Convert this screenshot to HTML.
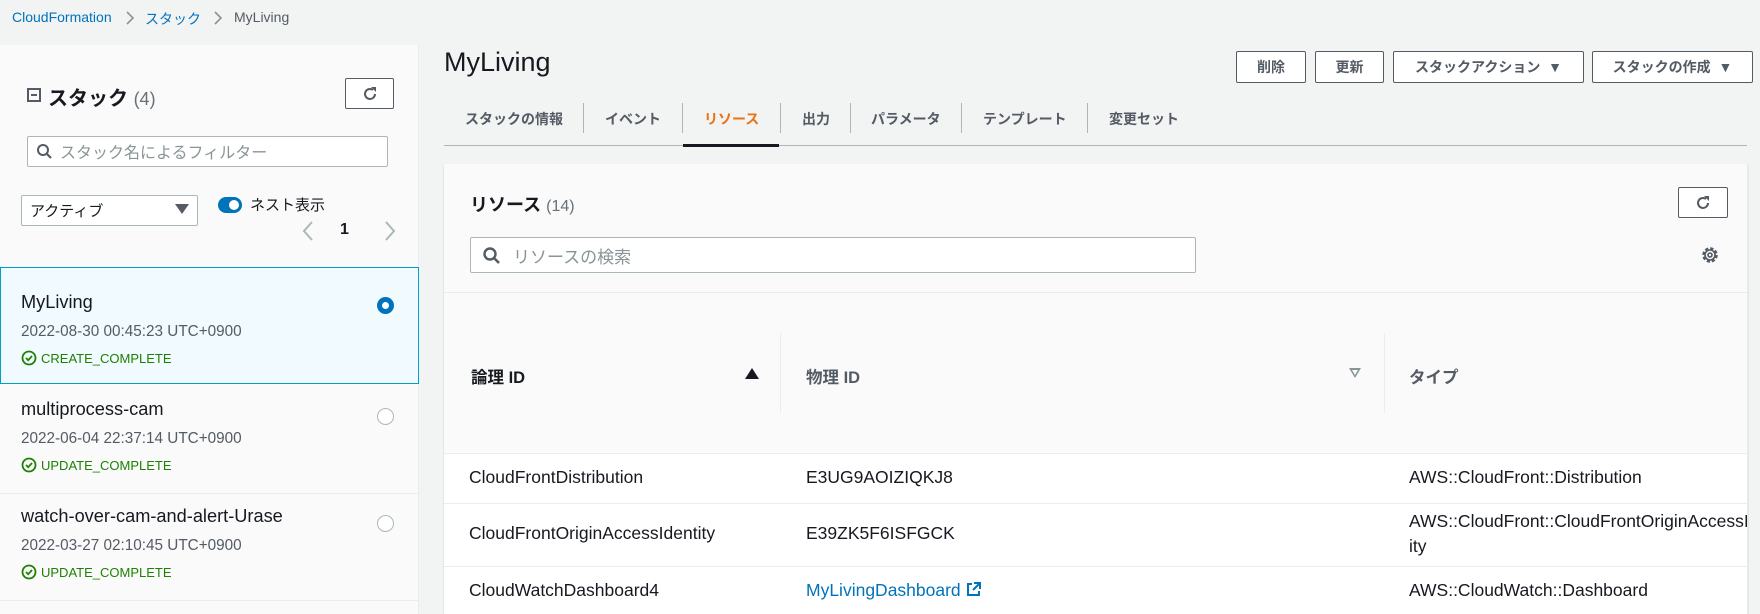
<!DOCTYPE html>
<html><head><meta charset="utf-8"><style>
*{box-sizing:border-box;margin:0;padding:0}
body{width:1760px;height:614px;overflow:hidden;background:#f2f3f3;font-family:"Liberation Sans","Noto Sans CJK JP",sans-serif;color:#16191f;position:relative}
.a{position:absolute;white-space:nowrap}
.btn{position:absolute;border:1px solid #545b64;background:#fff;border-radius:2px;font-size:14px;font-weight:bold;color:#545b64;display:flex;align-items:center;justify-content:center}
.sep{position:absolute;width:1px;background:#aab7b8}
.g{color:#1d8102;font-size:13px}
.row{position:absolute;left:444px;width:1303px;height:1px;background:#eaeded}
.t{font-size:17.5px}
.n{font-size:18.2px}
.d{font-size:15.3px;color:#545b64}
</style></head><body>
<div class="a" style="left:12px;top:9px;font-size:14px;color:#0073bb">CloudFormation</div>
<svg class="a" style="left:125px;top:10px" width="10" height="16"><path d="M2 2l6 6-6 6" fill="none" stroke="#879596" stroke-width="1.6"/></svg>
<div class="a" style="left:145px;top:9px;font-size:14px;color:#0073bb">スタック</div>
<svg class="a" style="left:213px;top:10px" width="10" height="16"><path d="M2 2l6 6-6 6" fill="none" stroke="#879596" stroke-width="1.6"/></svg>
<div class="a" style="left:234px;top:9px;font-size:14px;color:#545b64">MyLiving</div>

<div class="a" style="left:0;top:45px;width:419px;height:569px;background:#fafafa;border-right:1px solid #eaeded"></div>
<div class="a" style="left:27px;top:88px;width:14px;height:14px;border:2px solid #545b64"><div style="position:absolute;left:2px;top:4px;width:6px;height:2px;background:#545b64"></div></div>
<div class="a" style="left:48px;top:82px;font-size:20px;font-weight:bold">スタック <span style="font-weight:normal;color:#687078;font-size:18px">(4)</span></div>
<div class="btn" style="left:345px;top:78px;width:49px;height:31px"><svg width="18" height="18" viewBox="0 0 18 18"><path d="M14 9a5 5 0 1 1-2-4" fill="none" stroke="#545b64" stroke-width="2"/><path d="M10 2h5v5z" fill="#545b64"/></svg></div>
<div class="a" style="left:27px;top:136px;width:361px;height:31px;background:#fff;border:1px solid #aab7b8;border-radius:2px"></div>
<svg class="a" style="left:36px;top:143px" width="17" height="17" viewBox="0 0 17 17"><circle cx="7" cy="7" r="5" fill="none" stroke="#545b64" stroke-width="2"/><path d="M11 11l4 4" stroke="#545b64" stroke-width="2.2"/></svg>
<div class="a" style="left:60px;top:139px;font-size:16px;color:#879596">スタック名によるフィルター</div>
<div class="a" style="left:21px;top:195px;width:177px;height:31px;background:#fff;border:1px solid #aab7b8;border-radius:2px"></div>
<div class="a" style="left:30px;top:200px;font-size:15px">アクティブ</div>
<div class="a" style="left:175px;top:204px;width:0;height:0;border-left:7px solid transparent;border-right:7px solid transparent;border-top:10px solid #545b64"></div>
<div class="a" style="left:218px;top:197px;width:24px;height:16px;border-radius:8px;background:#0073bb"><div style="position:absolute;left:11px;top:3px;width:10px;height:10px;border-radius:50%;background:#fff"></div></div>
<div class="a" style="left:250px;top:194px;font-size:15px">ネスト表示</div>
<svg class="a" style="left:300px;top:219px" width="100" height="24"><path d="M12 3l-8 9 8 9" fill="none" stroke="#aab7b8" stroke-width="2"/><path d="M86 3l8 9-8 9" fill="none" stroke="#aab7b8" stroke-width="2"/></svg>
<div class="a" style="left:340px;top:221px;font-size:16px;font-weight:bold">1</div>

<div class="a" style="left:0;top:267px;width:419px;height:117px;background:#f1faff;border:1px solid #00a1c9"></div>
<div class="a n" style="left:21px;top:292px">MyLiving</div>
<div class="a d" style="left:21px;top:323px">2022-08-30 00:45:23 UTC+0900</div>
<div class="a" style="left:377px;top:297px;width:17px;height:17px;border-radius:50%;background:#0073bb"><div style="position:absolute;left:5px;top:5px;width:7px;height:7px;border-radius:50%;background:#fff"></div></div>
<div class="a" style="left:0;top:493px;width:419px;height:1px;background:#eaeded"></div>
<div class="a n" style="left:21px;top:399px">multiprocess-cam</div>
<div class="a d" style="left:21px;top:430px">2022-06-04 22:37:14 UTC+0900</div>
<div class="a" style="left:377px;top:408px;width:17px;height:17px;border-radius:50%;border:1.5px solid #aab7b8;background:#fff"></div>
<div class="a" style="left:0;top:600px;width:419px;height:1px;background:#eaeded"></div>
<div class="a n" style="left:21px;top:506px">watch-over-cam-and-alert-Urase</div>
<div class="a d" style="left:21px;top:537px">2022-03-27 02:10:45 UTC+0900</div>
<div class="a" style="left:377px;top:515px;width:17px;height:17px;border-radius:50%;border:1.5px solid #aab7b8;background:#fff"></div>

<svg class="a" style="left:21px;top:350px" width="16" height="16"><circle cx="8" cy="8" r="6.5" fill="none" stroke="#1d8102" stroke-width="1.8"/><path d="M5 8l2.2 2.2L11 6" fill="none" stroke="#1d8102" stroke-width="1.8"/></svg>
<div class="a g" style="left:41px;top:351px">CREATE_COMPLETE</div>
<svg class="a" style="left:21px;top:457px" width="16" height="16"><circle cx="8" cy="8" r="6.5" fill="none" stroke="#1d8102" stroke-width="1.8"/><path d="M5 8l2.2 2.2L11 6" fill="none" stroke="#1d8102" stroke-width="1.8"/></svg>
<div class="a g" style="left:41px;top:458px">UPDATE_COMPLETE</div>
<svg class="a" style="left:21px;top:564px" width="16" height="16"><circle cx="8" cy="8" r="6.5" fill="none" stroke="#1d8102" stroke-width="1.8"/><path d="M5 8l2.2 2.2L11 6" fill="none" stroke="#1d8102" stroke-width="1.8"/></svg>
<div class="a g" style="left:41px;top:565px">UPDATE_COMPLETE</div>

<div class="a" style="left:444px;top:47px;font-size:27px">MyLiving</div>
<div class="btn" style="left:1236px;top:51px;width:70px;height:32px">削除</div>
<div class="btn" style="left:1315px;top:51px;width:69px;height:32px">更新</div>
<div class="btn" style="left:1393px;top:51px;width:191px;height:32px">スタックアクション&nbsp;&nbsp;▼</div>
<div class="btn" style="left:1592px;top:51px;width:161px;height:32px">スタックの作成&nbsp;&nbsp;▼</div>

<div class="a" style="left:465px;top:109px;font-size:14px;font-weight:bold;color:#545b64">スタックの情報</div>
<div class="sep" style="left:583px;top:103px;height:30px"></div>
<div class="a" style="left:605px;top:109px;font-size:14px;font-weight:bold;color:#545b64">イベント</div>
<div class="sep" style="left:682px;top:103px;height:30px"></div>
<div class="a" style="left:704px;top:109px;font-size:14px;font-weight:bold;color:#ec7211">リソース</div>
<div class="sep" style="left:780px;top:103px;height:30px"></div>
<div class="a" style="left:802px;top:109px;font-size:14px;font-weight:bold;color:#545b64">出力</div>
<div class="sep" style="left:850px;top:103px;height:30px"></div>
<div class="a" style="left:871px;top:109px;font-size:14px;font-weight:bold;color:#545b64">パラメータ</div>
<div class="sep" style="left:961px;top:103px;height:30px"></div>
<div class="a" style="left:983px;top:109px;font-size:14px;font-weight:bold;color:#545b64">テンプレート</div>
<div class="sep" style="left:1087px;top:103px;height:30px"></div>
<div class="a" style="left:1109px;top:109px;font-size:14px;font-weight:bold;color:#545b64">変更セット</div>
<div class="a" style="left:444px;top:145px;width:1303px;height:1px;background:#aab7b8"></div>
<div class="a" style="left:683px;top:144px;width:96px;height:3px;background:#16191f"></div>

<div class="a" style="left:444px;top:164px;width:1304px;height:450px;background:#fafafa;border-right:1px solid #eaeded;box-shadow:0 1px 1px rgba(0,28,36,.3)"></div>
<div class="a" style="left:470px;top:191px;font-size:18px;font-weight:bold">リソース <span style="font-weight:normal;color:#687078;font-size:16px">(14)</span></div>
<div class="btn" style="left:1678px;top:187px;width:50px;height:31px"><svg width="18" height="18" viewBox="0 0 18 18"><path d="M14 9a5 5 0 1 1-2-4" fill="none" stroke="#545b64" stroke-width="2"/><path d="M10 2h5v5z" fill="#545b64"/></svg></div>
<div class="a" style="left:470px;top:237px;width:726px;height:36px;background:#fff;border:1px solid #aab7b8;border-radius:2px"></div>
<svg class="a" style="left:482px;top:246px" width="19" height="19" viewBox="0 0 19 19"><circle cx="8" cy="8" r="5.5" fill="none" stroke="#545b64" stroke-width="2.4"/><path d="M12 12l5 5" stroke="#545b64" stroke-width="2.6"/></svg>
<div class="a" style="left:513px;top:243px;font-size:17px;color:#879596">リソースの検索</div>
<svg class="a" style="left:1700px;top:245px" width="20" height="20" viewBox="0 0 20 20"><circle cx="10" cy="10" r="6.5" fill="none" stroke="#545b64" stroke-width="2.5" stroke-dasharray="3.2 1.9"/><circle cx="10" cy="10" r="5" fill="none" stroke="#545b64" stroke-width="1.6"/><circle cx="10" cy="10" r="2" fill="none" stroke="#545b64" stroke-width="1.6"/></svg>
<div class="row" style="top:292px"></div>
<div class="sep" style="left:780px;top:333px;height:80px;background:#eaeded"></div>
<div class="sep" style="left:1384px;top:333px;height:80px;background:#eaeded"></div>
<div class="a" style="left:471px;top:364px;font-size:16.5px;font-weight:bold">論理 ID</div>
<div class="a" style="left:745px;top:368px;width:0;height:0;border-left:7px solid transparent;border-right:7px solid transparent;border-bottom:11px solid #16191f"></div>
<div class="a" style="left:806px;top:364px;font-size:16.5px;font-weight:bold;color:#545b64">物理 ID</div>
<div class="a" style="left:1349px;top:368px;width:0;height:0;border-left:6px solid transparent;border-right:6px solid transparent;border-top:10px solid #879596"><div style="position:absolute;left:-3px;top:-8px;border-left:3px solid transparent;border-right:3px solid transparent;border-top:5px solid #fafafa"></div></div>
<div class="a" style="left:1409px;top:364px;font-size:16.5px;font-weight:bold;color:#545b64">タイプ</div>
<div class="a" style="left:444px;top:453px;width:1303px;height:161px;background:#fff"></div>
<div class="row" style="top:453px"></div>
<div class="a t" style="left:469px;top:467px">CloudFrontDistribution</div>
<div class="a t" style="left:806px;top:467px">E3UG9AOIZIQKJ8</div>
<div class="a t" style="left:1409px;top:467px">AWS::CloudFront::Distribution</div>
<div class="row" style="top:503px"></div>
<div class="a t" style="left:469px;top:523px">CloudFrontOriginAccessIdentity</div>
<div class="a t" style="left:806px;top:523px">E39ZK5F6ISFGCK</div>
<div class="a t" style="left:1409px;top:511px;width:338px;overflow:hidden">AWS::CloudFront::CloudFrontOriginAccessIdent</div>
<div class="a t" style="left:1409px;top:536px">ity</div>
<div class="row" style="top:566px"></div>
<div class="a t" style="left:469px;top:580px">CloudWatchDashboard4</div>
<div class="a t" style="left:806px;top:580px;color:#0073bb">MyLivingDashboard <svg width="15" height="15" viewBox="0 0 15 15" style="vertical-align:-1px"><path d="M6 2H2v11h11V9" fill="none" stroke="#0073bb" stroke-width="2"/><path d="M8 1h6v6M14 1L7 8" fill="none" stroke="#0073bb" stroke-width="2"/></svg></div>
<div class="a t" style="left:1409px;top:580px">AWS::CloudWatch::Dashboard</div>
</body></html>
